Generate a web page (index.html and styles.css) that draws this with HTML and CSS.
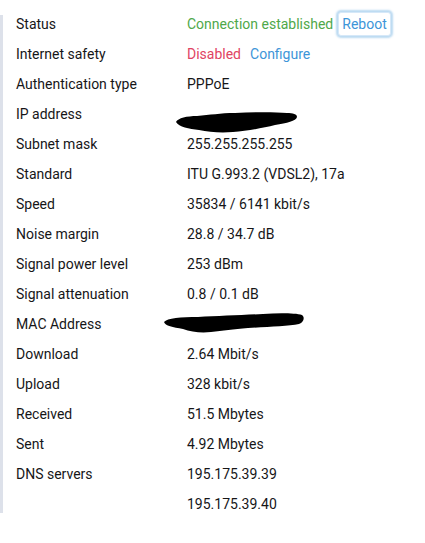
FILE: index.html
```html
<!DOCTYPE html>
<html>
<head>
    <title>Internet status</title>
    <link rel="stylesheet" href="styles.css">
</head>
<body>
    <div class="info">
        <div class="row">
            <span class="label">Status</span>
            <span class="value"><span class="ok">Connection established</span><button class="link-btn focused">Reboot</button></span>
        </div>
        <div class="row">
            <span class="label">Internet safety</span>
            <span class="value"><span class="bad">Disabled</span><a class="link" href="#">Configure</a></span>
        </div>
        <div class="row">
            <span class="label">Authentication type</span>
            <span class="value">PPPoE</span>
        </div>
        <div class="row">
            <span class="label">IP address</span>
            <span class="value">
                <!-- censored -->
                <svg class="scribble ip" width="124" height="24" viewBox="0 0 124 24">
                    <path d="M1 12 C3 8 12 6 22 6 C35 5 45 3 60 3 C80 2 100 2 112 3 C118 3 122 4 122 7 C121 11 112 13 100 15 C88 18 72 21 58 22 C45 23 34 22 24 20 C14 19 4 17 1 12 Z" fill="#000"/>
                </svg>
            </span>
        </div>
        <div class="row">
            <span class="label">Subnet mask</span>
            <span class="value">255.255.255.255</span>
        </div>
        <div class="row">
            <span class="label">Standard</span>
            <span class="value">ITU G.993.2 (VDSL2), 17a</span>
        </div>
        <div class="row">
            <span class="label">Speed</span>
            <span class="value">35834 / 6141 kbit/s</span>
        </div>
        <div class="row">
            <span class="label">Noise margin</span>
            <span class="value">28.8 / 34.7 dB</span>
        </div>
        <div class="row">
            <span class="label">Signal power level</span>
            <span class="value">253 dBm</span>
        </div>
        <div class="row">
            <span class="label">Signal attenuation</span>
            <span class="value">0.8 / 0.1 dB</span>
        </div>
        <div class="row">
            <span class="label">MAC Address</span>
            <span class="value">
                <svg class="scribble mac" width="142" height="22" viewBox="0 0 142 22">
                    <path d="M1 10 C4 6 18 5 35 5 C55 4 80 3 100 2 C115 1 132 1 139 3 C142 5 141 10 136 12 C125 14 105 15 85 16 C70 17 60 19 48 20 C38 21 28 20 20 17 C10 15 2 14 1 10 Z" fill="#000"/>
                </svg>
            </span>
        </div>
        <div class="row">
            <span class="label">Download</span>
            <span class="value">2.64 Mbit/s</span>
        </div>
        <div class="row">
            <span class="label">Upload</span>
            <span class="value">328 kbit/s</span>
        </div>
        <div class="row">
            <span class="label">Received</span>
            <span class="value">51.5 Mbytes</span>
        </div>
        <div class="row">
            <span class="label">Sent</span>
            <span class="value">4.92 Mbytes</span>
        </div>
        <div class="row">
            <span class="label">DNS servers</span>
            <span class="value">195.175.39.39</span>
        </div>
        <div class="row">
            <span class="label"></span>
            <span class="value">195.175.39.40</span>
        </div>
    </div>
</body>
</html>
```

FILE: styles.css
```css
body {
    margin: 0;
    background-color: #fff;
    font-family: Roboto, "Liberation Sans", sans-serif;
    font-size: 14px;
    color: #161618;
}

/* info block */
.info {
    margin-top: 15px;
    border-left: 3px solid #dde1ea;
    display: flex;
    flex-direction: column;
    gap: 12px;
}

.row {
    display: flex;
    align-items: center;
    height: 18px;
    line-height: 18px;
}

.label {
    width: 171px;
    padding-left: 13px;
    flex-shrink: 0;
}

.value {
    display: flex;
    align-items: center;
    position: relative;
}

.ok {
    color: #4fa84a;
}

.bad {
    color: #df4463;
}

.link {
    color: #3d95d8;
    text-decoration: none;
    margin-left: 9px;
}

.link-btn {
    font-family: inherit;
    font-size: 14px;
    color: #3d95d8;
    background: #fff;
    border: 1px solid #d6e8f8;
    border-radius: 3px;
    padding: 2px 3px;
    margin-left: 5px;
    height: 24px;
    line-height: 18px;
}

.focused {
    box-shadow: 0 0 2px 2px rgba(61, 149, 216, 0.35);
}

/* redacted values */
.scribble {
    position: absolute;
}

.ip {
    left: -12px;
    top: -4px;
}

.mac {
    left: -24px;
    top: -12px;
}
```
